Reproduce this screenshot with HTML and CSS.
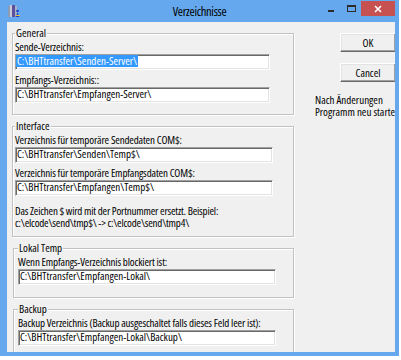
FILE: index.html
```html
<!DOCTYPE html>
<html>
<head>
<meta charset="utf-8">
<title>Verzeichnisse</title>
<link rel="stylesheet" href="styles.css">
</head>
<body>
<div class="window">
  <div class="titlebar">
    <div class="app-icon">
      <svg width="12" height="12" viewBox="0 0 12 12">
        <rect x="0" y="1" width="2" height="11" fill="#8e9bb2"/>
        <rect x="2" y="0" width="2" height="12" fill="#c7ccd8"/>
        <rect x="4" y="0" width="3" height="12" fill="#5b4f9e"/>
        <rect x="7" y="1" width="2" height="11" fill="#a9b1c6"/>
        <circle cx="9.5" cy="6" r="1.3" fill="#1f3fc4"/>
        <path d="M7.5 12 L9.5 7.5 L11.5 12 Z" fill="#1f3fc4"/>
        <rect x="8" y="10" width="4" height="1" fill="#e8c23a"/>
      </svg>
    </div>
    <div class="title">Verzeichnisse</div>
    <div class="controls">
      <span class="ctl ctl-min"><i class="glyph-min"></i></span>
      <span class="ctl ctl-max"><i class="glyph-max"></i></span>
      <span class="ctl ctl-close">
        <svg width="8" height="8" viewBox="0 0 8 8"><path d="M1 1 L7 7 M7 1 L1 7" stroke="#fff" stroke-width="1.6"/></svg>
      </span>
    </div>
  </div>
  <div class="client">
    <div class="groups">
      <fieldset class="group group-general">
        <legend>General</legend>
        <div class="label">Sende-Verzeichnis:</div>
        <div class="field field-short"><span class="sel">C:\BHTtransfer\Senden-Server\</span></div>
        <div class="label">Empfangs-Verzeichnis::</div>
        <div class="field field-short">C:\BHTtransfer\Empfangen-Server\</div>
      </fieldset>
      <fieldset class="group group-interface">
        <legend>Interface</legend>
        <div class="label">Verzeichnis für temporäre Sendedaten COM$:</div>
        <div class="field">C:\BHTtransfer\Senden\Temp$\</div>
        <div class="label">Verzeichnis für temporäre Empfangsdaten COM$:</div>
        <div class="field">C:\BHTtransfer\Empfangen\Temp$\</div>
        <p class="note">Das Zeichen $ wird mit der Portnummer ersetzt. Beispiel:<br>c:\elcode\send\tmp$\ -&gt; c:\elcode\send\tmp4\</p>
      </fieldset>
      <fieldset class="group group-inset group-lokal">
        <legend>Lokal Temp</legend>
        <div class="label">Wenn Empfangs-Verzeichnis blockiert ist:</div>
        <div class="field">C:\BHTtransfer\Empfangen-Lokal\</div>
      </fieldset>
      <fieldset class="group group-inset group-backup">
        <legend>Backup</legend>
        <div class="label">Backup Verzeichnis (Backup ausgeschaltet falls dieses Feld leer ist):</div>
        <div class="field">C:\BHTtransfer\Empfangen-Lokal\Backup\</div>
      </fieldset>
    </div>
    <div class="side">
      <button class="btn" type="button">OK</button>
      <button class="btn" type="button">Cancel</button>
      <div class="hint">Nach Änderungen<br>Programm neu starten</div>
    </div>
  </div>
</div>
</body>
</html>
```

FILE: styles.css
```css
html, body {
  margin: 0;
  padding: 0;
  background: #ffffff;
}

body {
  font-family: "Open Sans", "Liberation Sans", sans-serif;
  font-stretch: 75%;
  font-size: 11px;
  color: #000;
}

.window {
  width: 399px;
  height: 356px;
  background: #66a8ee;
  display: flex;
  flex-direction: column;
  overflow: hidden;
}

.titlebar {
  height: 22px;
  flex: none;
  display: grid;
  grid-template-columns: 1fr auto 1fr;
  align-items: start;
}

.app-icon {
  padding: 5px 0 0 8px;
  line-height: 0;
}

.title {
  font-size: 12.5px;
  letter-spacing: -0.3px;
  line-height: 23px;
  color: #000;
}

.controls {
  justify-self: end;
  display: flex;
  padding-right: 4px;
}

.ctl {
  display: flex;
  justify-content: center;
  width: 20px;
  height: 16px;
}

.glyph-min {
  display: block;
  width: 6px;
  height: 2px;
  margin-top: 10px;
  background: #2b2b2b;
}

.glyph-max {
  display: block;
  width: 9px;
  height: 7px;
  margin-top: 5px;
  box-sizing: border-box;
  border: 1px solid #2b2b2b;
  border-top-width: 2px;
}

.ctl-close {
  width: 34px;
  height: 15px;
  margin-top: 1px;
  background: #c75050;
  align-items: center;
}

.client {
  flex: 1;
  margin: 0 4px 4px 7px;
  background: #f0f0f0;
  display: flex;
  overflow: hidden;
}

.groups {
  flex: none;
  width: 282px;
  padding-left: 5px;
}

.group {
  margin: 5px 0 0 0;
  padding: 2px 0 11px 2px;
  min-width: 0;
  border: 1px solid #c2c2c2;
  box-shadow: inset 1px 1px 0 #fff, 1px 1px 0 #fff;
}

.group legend {
  padding: 0 1px;
  line-height: 12px;
  background: #f0f0f0;
}

.group-interface {
  padding-bottom: 7px;
}

.group-inset {
  margin-left: 1px;
  padding-left: 4px;
  padding-bottom: 12px;
}

.label {
  line-height: 12px;
  letter-spacing: -0.15px;
  white-space: nowrap;
}

.field {
  box-sizing: border-box;
  width: 258px;
  height: 16px;
  margin-top: 1px;
  padding-left: 1px;
  line-height: 12px;
  white-space: nowrap;
  overflow: hidden;
  background: #fff;
  border: 1px solid;
  border-color: #a0a0a0 #fff #fff #a0a0a0;
  box-shadow: inset 1px 1px 0 #696969, inset -1px -1px 0 #e3e3e3;
}

.field-short {
  width: 255px;
}

.field + .label {
  margin-top: 4px;
}

.sel {
  display: inline-block;
  margin-left: -1px;
  padding: 0 1px;
  background: #3399ff;
  color: #fff;
}

.note {
  margin: 9px 0 0 0;
  line-height: 12px;
  letter-spacing: -0.2px;
  white-space: nowrap;
}

.side {
  flex: 1;
  display: flex;
  flex-direction: column;
  align-items: flex-start;
  padding-top: 11px;
}

.btn {
  box-sizing: border-box;
  width: 56px;
  height: 19px;
  margin: 0 0 0 46px;
  padding: 0;
  font: inherit;
  color: #000;
  background: #f0f0f0;
  border: 1px solid;
  border-color: #fff #696969 #696969 #fff;
  box-shadow: inset -1px -1px 0 #a0a0a0, inset 1px 1px 0 #e3e3e3;
  line-height: 15px;
  text-align: center;
}

.btn + .btn {
  margin-top: 11px;
}

.hint {
  margin: 12px 0 0 21px;
  line-height: 12px;
  white-space: nowrap;
}
```
